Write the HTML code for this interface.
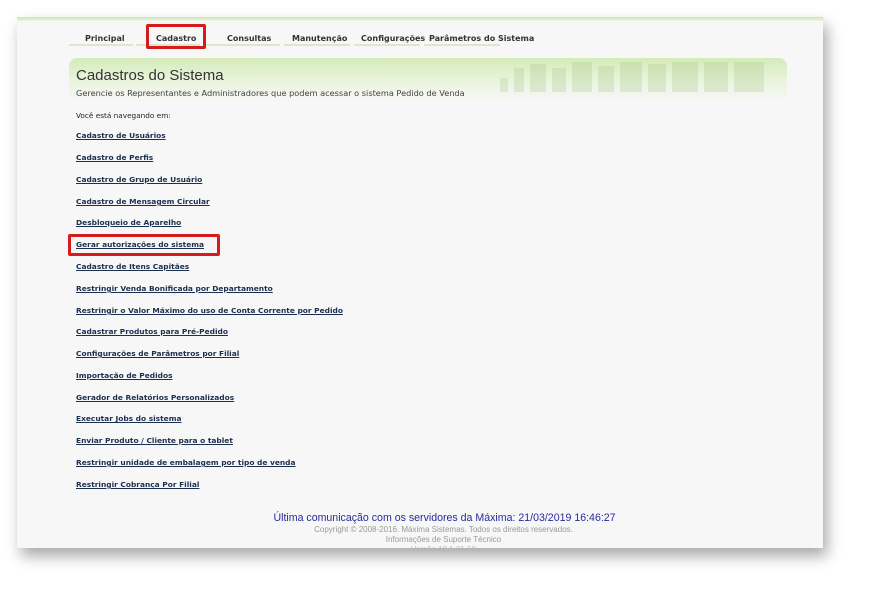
<!DOCTYPE html>
<html><head><meta charset="utf-8"><style>
body{margin:0;width:871px;height:596px;background:#fff;position:relative;overflow:hidden;font-family:"DejaVu Sans",Verdana,sans-serif}
.panel{position:absolute;left:17px;top:17px;width:806px;height:531px;background:#f7f7f7;box-shadow:4px 8px 14px rgba(0,0,0,0.35)}
.topline{position:absolute;left:17px;top:17px;width:806px;height:4px;background:linear-gradient(#cfe3b5,#eef5e4)}
.nav{position:absolute;top:34px;font-size:8px;font-weight:bold;color:#333;}
.navu{position:absolute;top:44px;height:2px;background:#dde6cf}
.banner{position:absolute;left:69px;top:58px;width:718px;height:44px;border-radius:8px 8px 0 0;background:linear-gradient(180deg,#d4eab9 0%,#e9f4dc 50%,#f7f7f7 100%)}
.h1{position:absolute;left:76px;top:67px;font-family:"Liberation Sans",Arial,sans-serif;font-size:15px;color:#333}
.sub{position:absolute;left:76px;top:88px;font-size:8.2px;color:#444}
.you{position:absolute;left:76px;top:111px;font-size:7.3px;color:#222}
a{position:absolute;left:76px;font-size:7.45px;font-weight:bold;color:#1c2f4f;text-decoration:underline;white-space:nowrap}
.red{position:absolute;border:3px solid #d51b1b;border-radius:2px}
.foot{position:absolute;left:0;width:871px;text-align:center;font-family:"Liberation Sans",Arial,sans-serif}
</style></head><body>
<div class="panel"></div>
<div class="topline"></div>
<div class="navu" style="left:69px;width:64px"></div>
<div class="navu" style="left:136px;width:64px"></div>
<div class="navu" style="left:204px;width:76px"></div>
<div class="navu" style="left:284px;width:66px"></div>
<div class="navu" style="left:354px;width:66px"></div>
<div class="navu" style="left:424px;width:76px"></div>
<div class="nav" style="left:85px">Principal</div>
<div class="nav" style="left:156px">Cadastro</div>
<div class="nav" style="left:227px">Consultas</div>
<div class="nav" style="left:292px">Manutenção</div>
<div class="nav" style="left:361px">Configurações</div>
<div class="nav" style="left:429px">Parâmetros do Sistema</div>
<div class="red" style="left:146px;top:24px;width:54px;height:19px"></div>
<div class="banner"></div>
<svg style="position:absolute;left:490px;top:58px" width="290" height="44" opacity="0.2">
<g fill="#8fb86f">
<rect x="10" y="20" width="8" height="14"/><rect x="24" y="10" width="10" height="24"/><rect x="40" y="6" width="16" height="28"/><rect x="62" y="10" width="14" height="24"/><rect x="82" y="4" width="20" height="30"/><rect x="108" y="8" width="16" height="26"/><rect x="130" y="4" width="22" height="30"/><rect x="158" y="6" width="18" height="28"/><rect x="182" y="4" width="26" height="30"/><rect x="214" y="4" width="24" height="30"/><rect x="244" y="4" width="30" height="30"/>
</g></svg>
<div class="h1">Cadastros do Sistema</div>
<div class="sub">Gerencie os Representantes e Administradores que podem acessar o sistema Pedido de Venda</div>
<div class="you">Você está navegando em:</div>
<a style="top:131px">Cadastro de Usuários</a>
<a style="top:153px">Cadastro de Perfis</a>
<a style="top:175px">Cadastro de Grupo de Usuário</a>
<a style="top:197px">Cadastro de Mensagem Circular</a>
<a style="top:218px">Desbloqueio de Aparelho</a>
<a style="top:240px">Gerar autorizações do sistema</a>
<a style="top:262px">Cadastro de Itens Capitães</a>
<a style="top:284px">Restringir Venda Bonificada por Departamento</a>
<a style="top:306px">Restringir o Valor Máximo do uso de Conta Corrente por Pedido</a>
<a style="top:327px">Cadastrar Produtos para Pré-Pedido</a>
<a style="top:349px">Configurações de Parâmetros por Filial</a>
<a style="top:371px">Importação de Pedidos</a>
<a style="top:393px">Gerador de Relatórios Personalizados</a>
<a style="top:414px">Executar Jobs do sistema</a>
<a style="top:436px">Enviar Produto / Cliente para o tablet</a>
<a style="top:458px">Restringir unidade de embalagem por tipo de venda</a>
<a style="top:480px">Restringir Cobrança Por Filial</a>
<div class="red" style="left:68px;top:234px;width:146px;height:16px"></div>
<div class="foot" style="top:512px;font-size:10.6px;color:#2a2a9a;left:9px">Última comunicação com os servidores da Máxima: 21/03/2019 16:46:27</div>
<div class="foot" style="top:525px;font-size:8px;color:#999;left:8px">Copyright © 2008-2016. Máxima Sistemas. Todos os direitos reservados.</div>
<div class="foot" style="top:535px;font-size:8px;color:#999;left:8px">Informações de Suporte Técnico</div>
<div class="foot" style="top:545px;font-size:8px;color:#bbb;left:8px;height:3px;overflow:hidden">Versão 19.1.21.68</div>
</body></html>
